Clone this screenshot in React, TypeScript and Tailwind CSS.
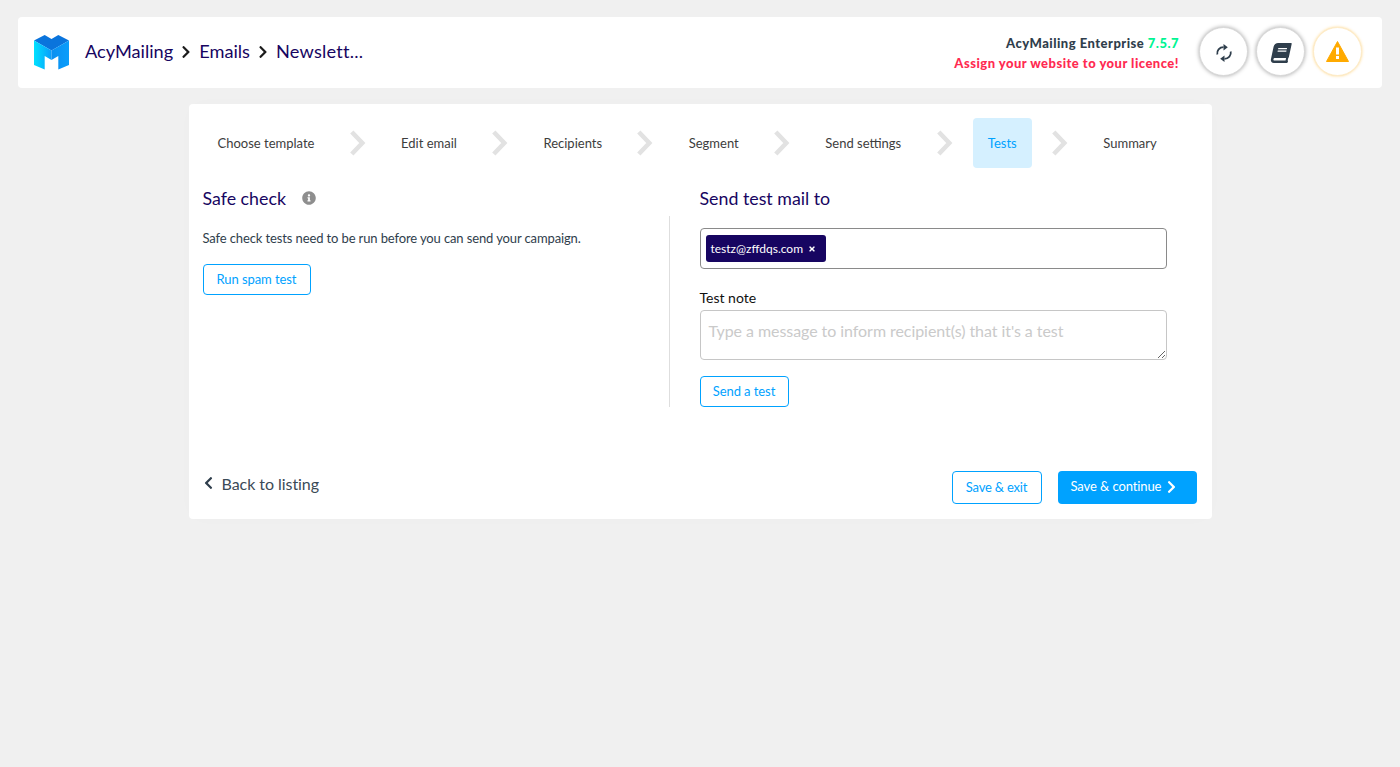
import { FaBook, FaChevronLeft, FaChevronRight, FaInfoCircle, FaTimes } from 'react-icons/fa';

const steps = ['Choose template', 'Edit email', 'Recipients', 'Segment', 'Send settings', 'Tests', 'Summary'];

const Logo = () => (
  <svg width="35" height="35" viewBox="0 0 36 35" className="shrink-0" preserveAspectRatio="none">
    <defs>
      <linearGradient id="left" x1="0" y1="0" x2="1" y2="0">
        <stop offset="0" stopColor="#00e1ff" />
        <stop offset="1" stopColor="#0a9dfb" />
      </linearGradient>
      <linearGradient id="right" x1="0" y1="0" x2="1" y2="0">
        <stop offset="0" stopColor="#0a8ff0" />
        <stop offset="1" stopColor="#0a9dfb" />
      </linearGradient>
    </defs>
    <path d="M0 5.500 11 0 18 4 25 0 36 5.500 18 15.500Z" fill="#0a74dc" />
    <path d="M0 5.500 18 15.500V25L11 21V34.500L0 30Z" fill="url(#left)" />
    <path d="M36 5.500 18 15.500V25L25 21V34.500L36 30Z" fill="url(#right)" />
  </svg>
);

const SyncIcon = () => (
  <svg width="20" height="20" viewBox="0 0 20 20" fill="none" stroke="#2f3e4c" strokeWidth="1.800" className="mt-[2px]">
    <path d="M3.300 11.500C2.500 7.500 5.500 4.200 9.500 4.200" />
    <path d="M16.700 8.500C17.500 12.500 14.500 15.800 10.500 15.800" />
    <path d="M9.500 1 13.800 4.200 9.500 7.500Z" fill="#2f3e4c" stroke="none" />
    <path d="M10.500 19 6.200 15.800 10.500 12.500Z" fill="#2f3e4c" stroke="none" />
  </svg>
);

const WarningIcon = () => (
  <svg width="23" height="21" viewBox="0 0 23 21">
    <path d="M11.500 0.500 22.500 20.500H0.500Z" fill="#ffaa00" stroke="#ffaa00" strokeLinejoin="round" />
    <rect x="10" y="6.500" width="3" height="7" fill="#ffffff" />
    <rect x="10" y="15" width="3" height="3" fill="#ffffff" />
  </svg>
);

const StepArrow = () => (
  <svg width="16" height="26" viewBox="0 0 16 26" fill="none" className="shrink-0">
    <path d="M1.800 2 12.300 13 1.800 24" stroke="#e2e2e2" strokeWidth="4.500" />
  </svg>
);

const CircleButton = ({ warn, children }: { warn?: boolean; children: React.ReactNode }) => (
  <div
    className={
      warn
        ? 'w-[49px] h-[49px] rounded-full bg-white flex items-center justify-center border border-[#fdebc8] shadow-[0_0_3px_rgba(255,170,0,0.45)]'
        : 'w-[49px] h-[49px] rounded-full bg-white flex items-center justify-center border border-[#d8d8d8] shadow-[0_0_4px_rgba(0,0,0,0.35)]'
    }
  >
    {children}
  </div>
);

export default function App() {
  return (
    <div className="min-h-[767px] bg-[#f0f0f0] pt-[17px] font-['Lato','Open_Sans',sans-serif]">
      <header className="mx-[18px] h-[71px] bg-white rounded-[4px] flex items-center justify-between pl-[16px] pr-[20px]">
        <div className="flex items-center text-[18.2px] leading-[26px] text-[#170561]">
          <Logo />
          <span className="ml-[16px] -mt-[4px]">AcyMailing</span>
          <FaChevronRight className="mx-[8px] -mt-[2px] w-[10px] h-[14px] text-[#1c1c1c]" />
          <span className="-mt-[4px]">Emails</span>
          <FaChevronRight className="mx-[8px] -mt-[2px] w-[10px] h-[14px] text-[#1c1c1c]" />
          <span className="-mt-[4px] tracking-[0.2px]">Newslett...</span>
        </div>
        <div className="flex items-center">
          <div className="text-right text-[13px] font-black tracking-[0.48px] leading-[20px] mr-[20px]">
            <div className="text-[#2f3e4c]">
              AcyMailing Enterprise <span className="text-[#00f593]">7.5.7</span>
            </div>
            <div className="text-[#ff2a51]">Assign your website to your licence!</div>
          </div>
          <div className="flex gap-[8px] -mt-[2px]">
            <CircleButton>
              <SyncIcon />
            </CircleButton>
            <CircleButton>
              <FaBook className="mt-[2px] w-[20px] h-[20px] text-[#2f3e4c] -skew-x-12" />
            </CircleButton>
            <CircleButton warn>
              <WarningIcon />
            </CircleButton>
          </div>
        </div>
      </header>

      <main className="w-[1023px] mx-auto mt-[16px] bg-white rounded-[4px] pt-[14px] pl-[14px] pr-[15px] pb-[15px] shadow-[0_0_24px_rgba(0,0,0,0.012)]">
        <nav className="flex items-center h-[50px] gap-[20.3px]">
          {steps.map((step, i) => (
            <div key={step} className="contents">
              <div
                className={
                  step === 'Tests'
                    ? 'h-[50px] px-[15px] pt-[2px] flex items-center rounded-[4px] bg-[#d5f0ff] text-[13px] text-[#00a2ff]'
                    : 'h-[50px] px-[15px] pt-[2px] flex items-center text-[13px] text-[#3d3d3d]'
                }
              >
                {step}
              </div>
              {i < steps.length - 1 && <StepArrow />}
            </div>
          ))}
        </nav>

        <div className="grid grid-cols-[467px_1fr] mt-[16px]">
          <div className="h-[34px] flex items-center text-[17.8px] text-[#170561] -mt-[2px] pb-[2px]">
            Safe check
            <FaInfoCircle className="ml-[16px] w-[14px] h-[14px] text-[#8e8e8e]" />
          </div>
          <div className="h-[34px] flex items-center text-[17.8px] text-[#170561] pl-[30px] -mt-[2px] pb-[2px]">
            Send test mail to
          </div>

          <section className="h-[191px] border-r border-[#dedede] pt-[12px]">
            <p className="text-[13px] leading-[20px] tracking-[-0.12px] text-[#2f3e4c]">
              Safe check tests need to be run before you can send your campaign.
            </p>
            <button className="mt-[16px] h-[31px] w-[108px] border border-[#00a2ff] rounded-[4px] text-[13px] tracking-[-0.08px] text-[#00a2ff]">
              Run spam test
            </button>
          </section>

          <section className="pl-[30px] pt-[12px] pr-[30px]">
            <div className="h-[41px] border border-[#8a8a8a] rounded-[4px] flex items-center px-[5px]">
              <span className="h-[27px] w-[120px] rounded-[3px] bg-[#170561] text-white text-[12px] flex items-center pl-[5px]">
                testz@zffdqs.com
                <FaTimes className="ml-[5px] w-[8px] h-[8px]" />
              </span>
            </div>
            <label className="block mt-[20px] text-[14px] leading-[18px] text-[#111111]">Test note</label>
            <textarea
              className="block mt-[3px] w-full h-[50px] border border-[#c6c6c6] rounded-[4px] px-[8px] py-[8px] text-[16px] leading-[24px] tracking-[-0.06px] outline-none placeholder:text-[#cacaca]"
              placeholder="Type a message to inform recipient(s) that it's a test"
            />
            <button className="mt-[16px] h-[31px] w-[89px] border border-[#00a2ff] rounded-[4px] text-[13px] tracking-[-0.08px] text-[#00a2ff]">
              Send a test
            </button>
          </section>
        </div>

        <footer className="flex justify-between items-start mt-[64px]">
          <div className="flex items-center text-[16px] leading-[26px] tracking-[-0.05px] text-[#3b4a57]">
            <FaChevronLeft className="w-[11px] h-[14px] text-[#2f3e4c] -mt-[2px]" />
            <span className="ml-[8px]">Back to listing</span>
          </div>
          <div className="flex gap-[16px]">
            <button className="h-[33px] w-[90px] border border-[#00a2ff] rounded-[4px] text-[13px] tracking-[-0.2px] text-[#00a2ff]">
              Save &amp; exit
            </button>
            <button className="h-[33px] w-[139px] bg-[#00a2ff] rounded-[4px] text-[13px] tracking-[-0.1px] text-white flex items-center pl-[13px]">
              <span className="-mt-[2px]">Save &amp; continue</span>
              <FaChevronRight className="ml-[5px] -mt-[1px] w-[11px] h-[14px]" />
            </button>
          </div>
        </footer>
      </main>
    </div>
  );
}
